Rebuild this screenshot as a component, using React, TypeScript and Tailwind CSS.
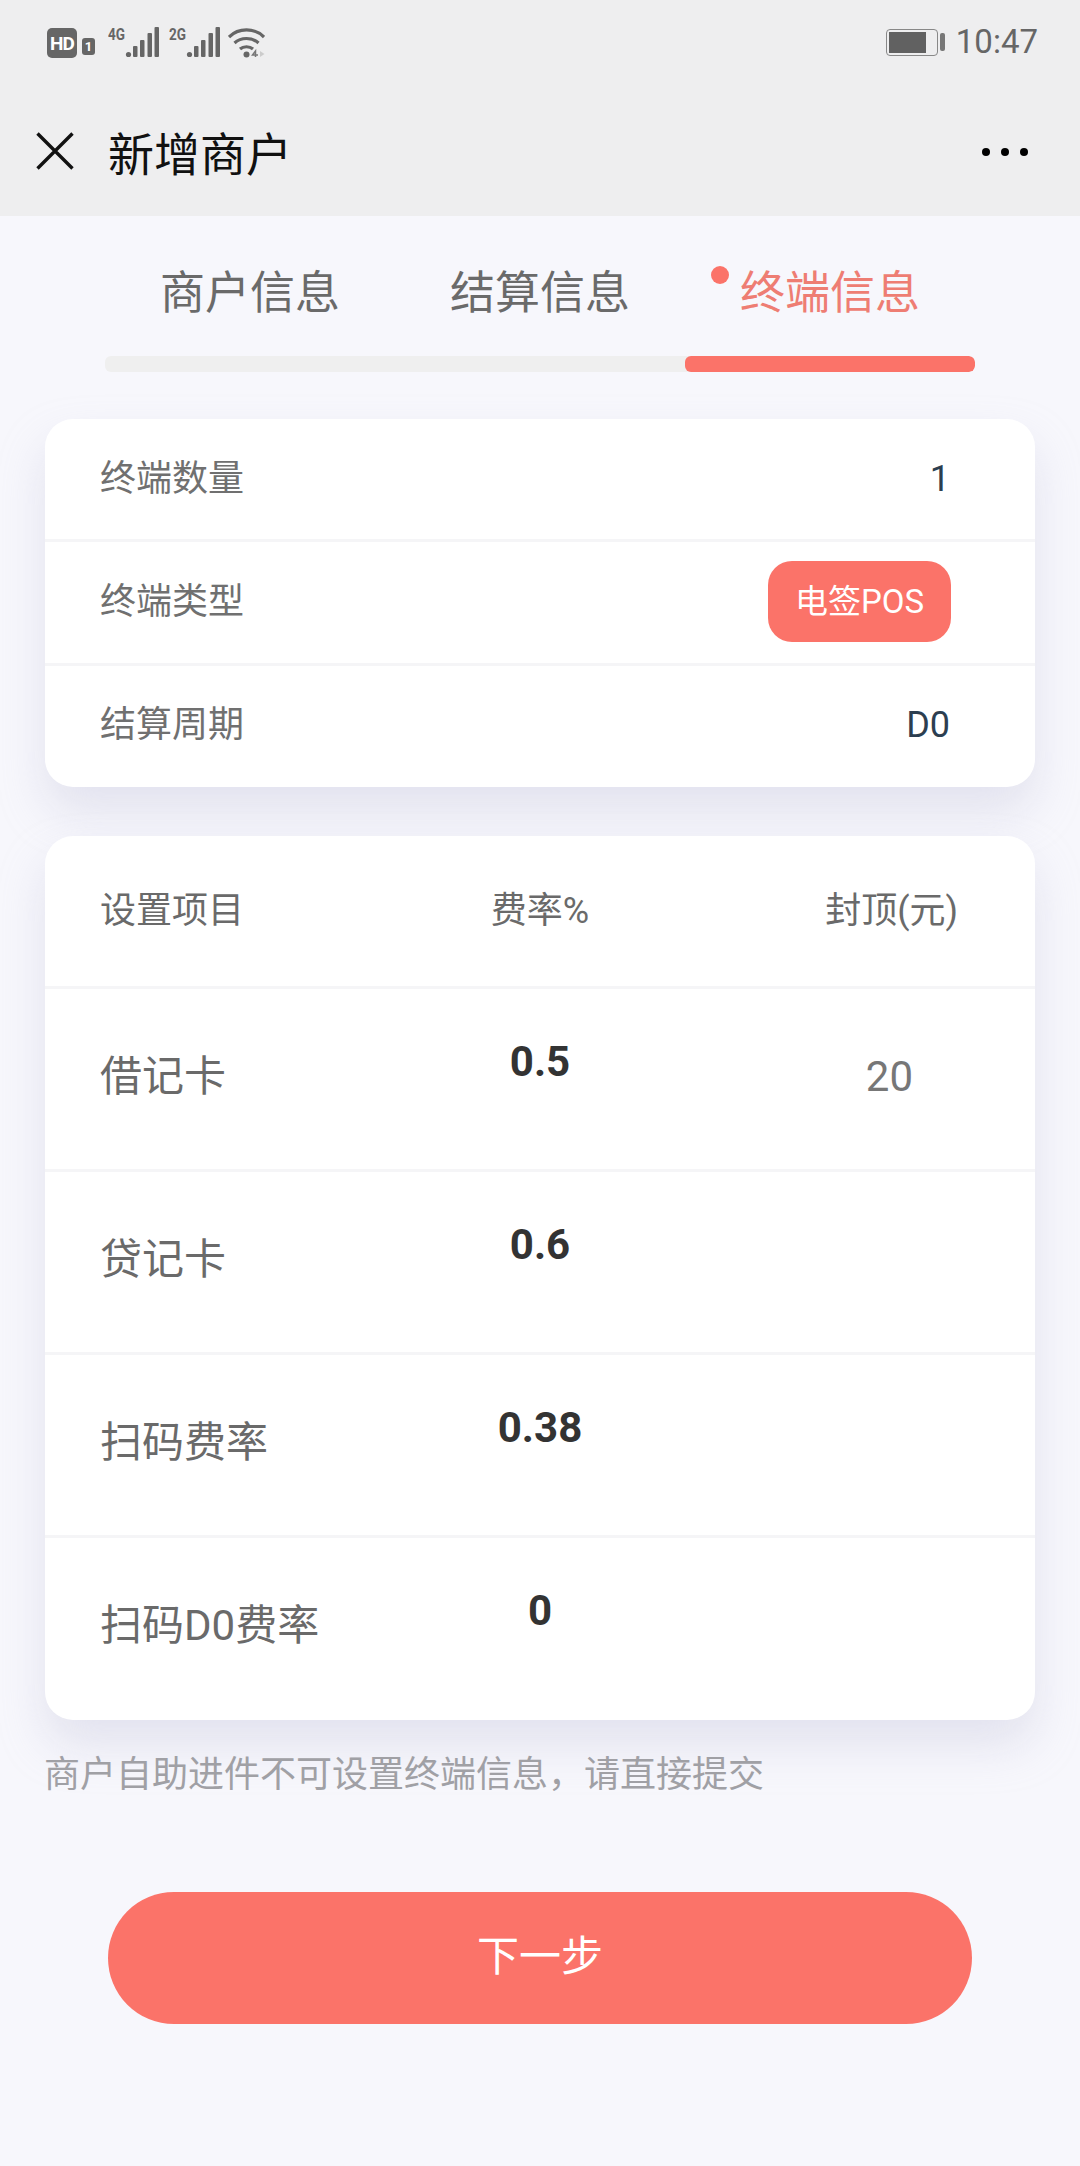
const FONT = "font-['Roboto','Noto_Sans_CJK_SC',sans-serif]";

function SignalIcon({ label }: { label: string }) {
  return (
    <svg width="52" height="37" viewBox="0 -6 52 37" fill="#666">
      <text x="0" y="13" fontSize="17" fontWeight="700" fontFamily="Roboto, sans-serif" textLength="17" lengthAdjust="spacingAndGlyphs">{label}</text>
      <circle cx="20.5" cy="27.5" r="2.6" />
      <rect x="25" y="19" width="4.5" height="11" rx="1" />
      <rect x="32" y="13" width="4.5" height="17" rx="1" />
      <rect x="39.5" y="6" width="4.5" height="24" rx="1" />
      <rect x="46.5" y="0" width="4.5" height="30" rx="1" />
    </svg>
  );
}

function StatusBar() {
  return (
    <div className="flex h-[86px] items-start justify-between pl-[47px] pr-[42px] pt-[25px]">
      <div className="flex items-start">
        <div className="flex items-center justify-center w-[30px] h-[30px] rounded-[5px] bg-[#666] text-white text-[19px] font-bold leading-none tracking-[-1px] mt-[3px]">HD</div>
        <div className="flex items-center justify-center w-[13px] h-[17px] rounded-[3px] bg-[#666] text-white text-[13px] font-bold leading-none mt-[13px] ml-[5px]">1</div>
        <div className="ml-[13px] -mt-[4px]"><SignalIcon label="4G" /></div>
        <div className="ml-[9px] -mt-[4px]"><SignalIcon label="2G" /></div>
        <svg className="ml-[7px] mt-[2px]" width="37" height="31" viewBox="0 0 37 31" fill="none" stroke="#666" strokeWidth="3.2">
          <path d="M1 10C10.5 0.5 26.5 0.5 36 10" />
          <path d="M6.5 16C13 10 24 10 30.5 16" />
          <path d="M12 22C15.5 19 21.5 19 25 22" />
          <circle cx="18.5" cy="27.5" r="3" fill="#666" stroke="none" />
          <path d="M27.5 30V24L24.5 28H30" stroke="#777" strokeWidth="1.5" />
          <path d="M32 24V30L36.5 27Z" fill="#ccc" stroke="none" />
        </svg>
      </div>
      <div className="flex items-center">
        <div className="flex items-center">
          <div className="w-[52px] h-[27px] rounded-[4px] border border-[#888] p-[2px] pr-[11px]">
            <div className="h-full bg-[#616161]" />
          </div>
          <div className="w-[5px] h-[18px] rounded-[2px] bg-[#777] ml-[2px]" />
        </div>
        <span className="ml-[11px] text-[33px] leading-[34px] text-[#666]">10:47</span>
      </div>
    </div>
  );
}

function TitleBar() {
  return (
    <div className="flex h-[130px] items-start justify-between pl-[36px] pr-[52px] pt-[40px]">
      <div className="flex items-start">
        <svg className="mt-[6px]" width="38" height="38" viewBox="0 0 38 38" stroke="#111" strokeWidth="3.4" fill="none">
          <path d="M1.5 1.5L36.5 36.5M36.5 1.5L1.5 36.5" />
        </svg>
        <span className="ml-[34px] mt-[4px] text-[46px] leading-[50px] text-[#111]">新增商户</span>
      </div>
      <div className="flex gap-[11px] pt-[22px]">
        <div className="size-[8px] rounded-full bg-black" />
        <div className="size-[8px] rounded-full bg-black" />
        <div className="size-[8px] rounded-full bg-black" />
      </div>
    </div>
  );
}

function Tabs() {
  return (
    <div className="px-[105px] pt-[53px]">
      <div className="grid grid-cols-3 text-[45px] leading-[50px] text-center text-[#6a6a6a]">
        <span>商户信息</span>
        <span>结算信息</span>
        <span className="relative text-[#ee7d73]">
          终端信息
          <span className="absolute left-[26px] top-[-3px] size-[18px] rounded-full bg-[#fb7369]" />
        </span>
      </div>
      <div className="mt-[37px] grid grid-cols-3 h-[16px] rounded-[6px] bg-[#efefef] overflow-hidden">
        <div className="col-start-3 bg-[#fb7369] rounded-[6px]" />
      </div>
    </div>
  );
}

function SettingsRow({ label, rate, cap, last }: { label: string; rate: string; cap?: string; last?: boolean }) {
  return (
    <div className={`grid grid-cols-3 items-start px-[55px] ${last ? "h-[182px]" : "h-[183px] border-b-[3px] border-[#f5f5f7]"}`}>
      <span className="pt-[63px] text-[42px] leading-[50px] text-[#6a6a6a] whitespace-nowrap">{label}</span>
      <span className="pt-[48px] text-[42px] leading-[50px] text-[#333] font-bold text-center">{rate}</span>
      <span className="pt-[63px] text-[42px] leading-[50px] text-[#777] text-right pr-[67px]">{cap}</span>
    </div>
  );
}

export default function App() {
  return (
    <div className={`${FONT} w-[1080px] h-[2166px] bg-[#f7f7fc] overflow-hidden`}>
      <div className="bg-[#eeeeef]">
        <StatusBar />
        <TitleBar />
      </div>
      <Tabs />
      <div className="mx-[45px] mt-[47px] rounded-[28px] bg-white shadow-[0_25px_45px_rgba(190,190,215,0.35)]">
        <div className="flex items-start justify-between pl-[55px] pr-[85px] h-[123px] border-b-[3px] border-[#f5f5f7] pt-[35px]">
          <span className="text-[36px] leading-[50px] text-[#707070]">终端数量</span>
          <span className="text-[36px] leading-[50px] text-[#2c3e50]">1</span>
        </div>
        <div className="flex items-start justify-between pl-[55px] pr-[84px] h-[124px] border-b-[3px] border-[#f5f5f7] pt-[19px]">
          <span className="text-[36px] leading-[50px] text-[#707070] pt-[16px]">终端类型</span>
          <span className="flex items-center justify-center w-[183px] h-[81px] rounded-[24px] bg-[#fb7369] text-[33px] text-[#fff]">电签POS</span>
        </div>
        <div className="flex items-start justify-between pl-[55px] pr-[85px] h-[121px] pt-[34px]">
          <span className="text-[36px] leading-[50px] text-[#707070]">结算周期</span>
          <span className="text-[36px] leading-[50px] text-[#2c3e50]">D0</span>
        </div>
      </div>
      <div className="mx-[45px] mt-[49px] rounded-[28px] bg-white shadow-[0_25px_45px_rgba(190,190,215,0.35)]">
        <div className="grid grid-cols-3 h-[153px] items-start px-[55px] pt-[50px] border-b-[3px] border-[#f5f5f7] text-[36px] leading-[50px] text-[#6a6a6a]">
          <span>设置项目</span>
          <span className="text-center">费率%</span>
          <span className="text-right pr-[22px]">封顶(元)</span>
        </div>
        <SettingsRow label="借记卡" rate="0.5" cap="20" />
        <SettingsRow label="贷记卡" rate="0.6" />
        <SettingsRow label="扫码费率" rate="0.38" />
        <SettingsRow label="扫码D0费率" rate="0" last />
      </div>
      <p className="ml-[44px] mt-[30px] text-[36px] leading-[50px] text-[#a0a0a5]">商户自助进件不可设置终端信息，请直接提交</p>
      <button className="block mx-auto mt-[92px] w-[864px] h-[132px] rounded-full bg-[#fb7369] pb-[4px] text-[42px] text-white">下一步</button>
    </div>
  );
}
